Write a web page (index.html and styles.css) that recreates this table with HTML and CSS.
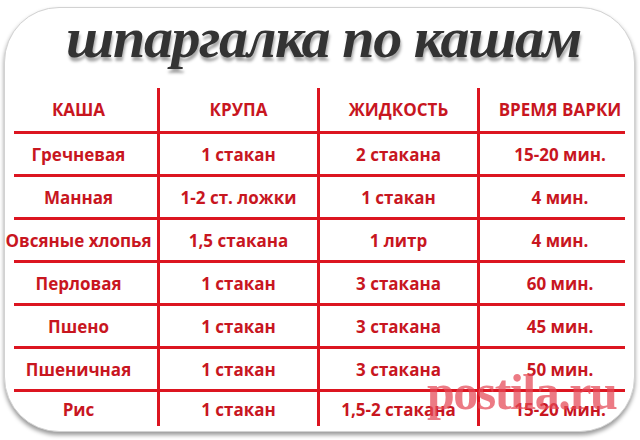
FILE: index.html
```html
<!DOCTYPE html>
<html lang="ru">
<head>
<meta charset="utf-8">
<title>шпаргалка по кашам</title>
<link rel="stylesheet" href="styles.css">
</head>
<body>
<div class="card">
  <h1 class="title">шпаргалка по кашам</h1>
  <div class="table">
    <div class="row head">
      <div class="cell">КАША</div>
      <div class="cell">КРУПА</div>
      <div class="cell">ЖИДКОСТЬ</div>
      <div class="cell">ВРЕМЯ ВАРКИ</div>
    </div>
    <div class="row">
      <div class="cell">Гречневая</div>
      <div class="cell">1 стакан</div>
      <div class="cell">2 стакана</div>
      <div class="cell">15-20 мин.</div>
    </div>
    <div class="row">
      <div class="cell">Манная</div>
      <div class="cell">1-2 ст. ложки</div>
      <div class="cell">1 стакан</div>
      <div class="cell">4 мин.</div>
    </div>
    <div class="row">
      <div class="cell">Овсяные хлопья</div>
      <div class="cell">1,5 стакана</div>
      <div class="cell">1 литр</div>
      <div class="cell">4 мин.</div>
    </div>
    <div class="row">
      <div class="cell">Перловая</div>
      <div class="cell">1 стакан</div>
      <div class="cell">3 стакана</div>
      <div class="cell">60 мин.</div>
    </div>
    <div class="row">
      <div class="cell">Пшено</div>
      <div class="cell">1 стакан</div>
      <div class="cell">3 стакана</div>
      <div class="cell">45 мин.</div>
    </div>
    <div class="row">
      <div class="cell">Пшеничная</div>
      <div class="cell">1 стакан</div>
      <div class="cell">3 стакана</div>
      <div class="cell">50 мин.</div>
    </div>
    <div class="row last">
      <div class="cell">Рис</div>
      <div class="cell">1 стакан</div>
      <div class="cell">1,5-2 стакана</div>
      <div class="cell">15-20 мин.</div>
    </div>
  </div>
  <div class="watermark">postila.ru</div>
</div>
</body>
</html>
```

FILE: styles.css
```css
html, body {
  margin: 0;
  padding: 0;
  background: #ffffff;
}

body {
  width: 640px;
  height: 440px;
  overflow: hidden;
}

.card {
  position: relative;
  box-sizing: border-box;
  margin: 7px 5px 0 4px;
  height: 425px;
  border: 1px solid #d2d2d2;
  border-radius: 55px;
  background: #ffffff;
  box-shadow: 0 3px 4px rgba(0, 0, 0, 0.4);
  overflow: hidden;
}

.title {
  margin: 0;
  height: 80px;
  line-height: 60px;
  text-align: center;
  font-family: "Liberation Serif", serif;
  font-style: italic;
  font-weight: 700;
  font-size: 58px;
  letter-spacing: -1.4px;
  color: #333333;
  text-shadow: 1px 4px 3px rgba(0, 0, 0, 0.35);
  padding-left: 8px;
}

.table {
  margin-left: -5px;
  width: 640px;
  font-family: "Open Sans", "DejaVu Sans", sans-serif;
  font-weight: 700;
  font-size: 17px;
  color: #c8161f;
}

.row {
  display: grid;
  grid-template-columns: 160px 160px 160px 160px;
  height: 43px;
  background: linear-gradient(#dc1520, #dc1520) no-repeat;
  background-size: 611px 3px;
  background-position: 14px 100%;
}

.row.head {
  height: 46px;
}

.row.last {
  height: 34px;
  background: none;
}

.cell {
  box-sizing: border-box;
  display: flex;
  align-items: center;
  justify-content: center;
  white-space: nowrap;
  padding-bottom: 3px;
}

.cell:not(:last-child) {
  border-right: 3px solid #dc1520;
}

.row.last .cell {
  padding-bottom: 0;
}

.watermark {
  position: absolute;
  left: 422px;
  top: 354px;
  font-family: "Liberation Serif", serif;
  font-weight: 700;
  font-size: 50px;
  letter-spacing: -1.5px;
  color: rgba(228, 70, 84, 0.72);
  line-height: 60px;
}
```
